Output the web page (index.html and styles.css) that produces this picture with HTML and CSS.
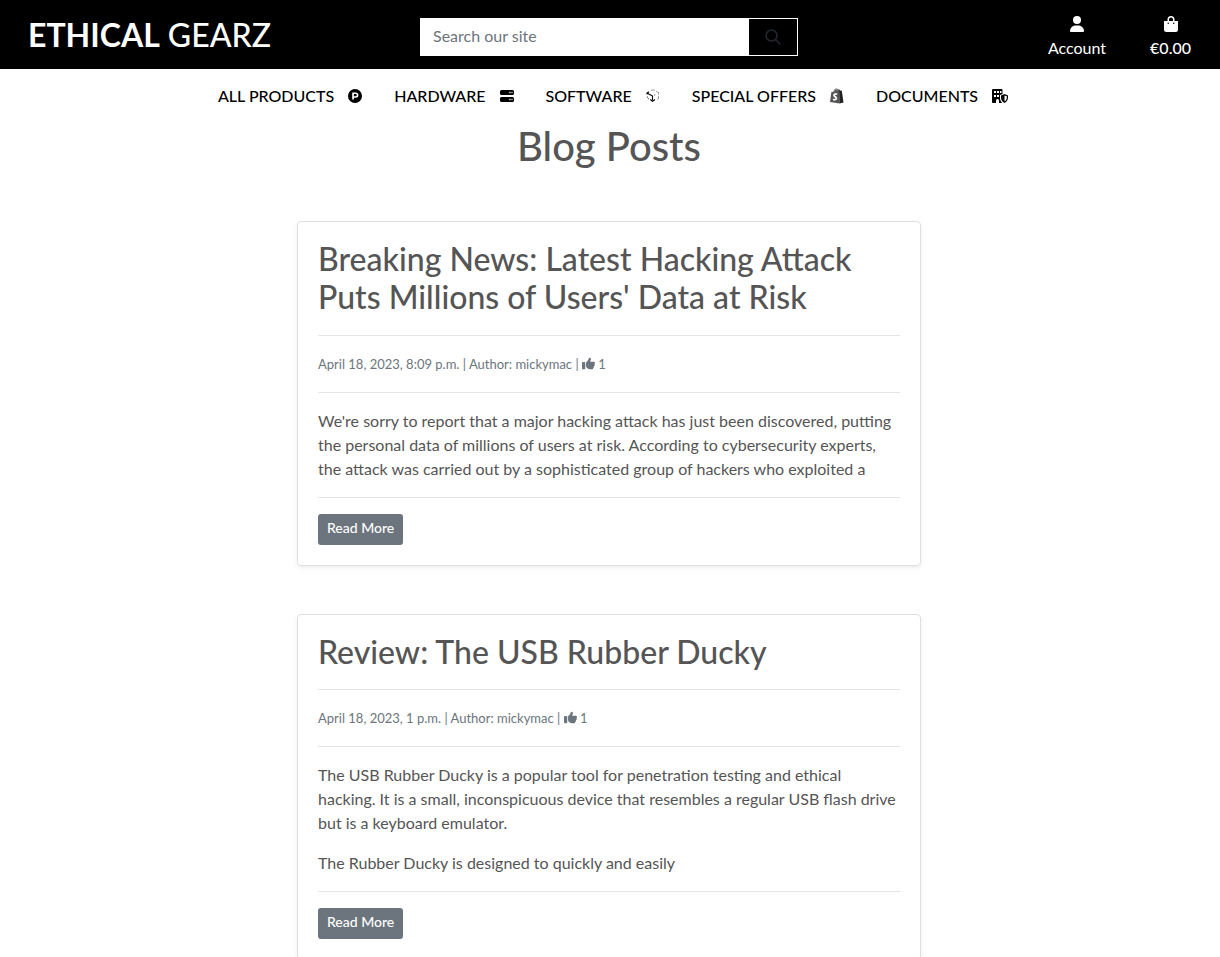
FILE: index.html
```html
<!DOCTYPE html>
<html lang="en">
<head>
<meta charset="utf-8">
<meta name="viewport" content="width=device-width, initial-scale=1">
<title>Ethical Gearz - Blog Posts</title>
<link rel="stylesheet" href="styles.css">
</head>
<body>
<svg class="sprite" aria-hidden="true">
  <symbol id="thumb" viewBox="0 0 512 512"><path d="M313 33c26 5 43 30 38 56l-2 11c-5 30-17 58-33 84h148c26 0 48 22 48 48 0 19-11 35-27 43 11 9 19 22 19 37 0 23-17 43-39 47 4 7 7 16 7 25 0 21-14 39-34 45 1 3 2 7 2 11 0 26-22 40-48 40h-98c-19 0-37-6-53-16l-38-26c-27-18-43-48-43-80V247c0-30 13-57 36-75l8-6c28-23 47-54 54-90l2-11c5-25 30-42 53-32zM32 192h64c18 0 32 14 32 32v224c0 18-14 32-32 32H32c-18 0-32-14-32-32V224c0-18 14-32 32-32z"/></symbol>
</svg>
<header class="site-header">
  <a class="brand" href="#"><strong>ETHICAL</strong> GEARZ</a>
  <form class="search">
    <input class="search-input" type="text" placeholder="Search our site" aria-label="Search our site">
    <button class="search-button" type="button" aria-label="Search">
      <svg viewBox="0 0 16 16" width="16" height="16" fill="none" stroke="currentColor" stroke-width="1.7" stroke-linecap="round"><circle cx="6.5" cy="6.5" r="5.5"/><path d="M10.6 10.6L15 15"/></svg>
    </button>
  </form>
  <div class="account">
    <a class="account-link" href="#">
      <svg viewBox="0 0 14 16" width="14" height="16" fill="currentColor"><circle cx="7" cy="4" r="4"/><path d="M0 15.1C0 12 2.500 9.500 5.600 9.500h2.800C11.500 9.500 14 12 14 15.100c0 .5-.4.9-.9.9H.9c-.5 0-.9-.4-.9-.9z"/></svg>
      <span>Account</span>
    </a>
    <a class="account-link" href="#">
      <svg viewBox="0 0 14 16" width="14" height="16"><path fill="currentColor" fill-rule="evenodd" d="M3.500 5V3.500a3.500 3.500 0 0 1 7 0V5H14v8.500a2.500 2.500 0 0 1-2.500 2.500h-9A2.500 2.500 0 0 1 0 13.500V5zM5 5h4V3.500a2 2 0 0 0-4 0zM4.250 8a.75.75 0 1 0 0-1.500.75.75 0 0 0 0 1.500zm5.500 0a.75.75 0 1 0 0-1.500.75.75 0 0 0 0 1.500z"/></svg>
      <span class="total">€0.00</span>
    </a>
  </div>
</header>
<nav class="main-nav">
  <a href="#">ALL PRODUCTS
    <svg viewBox="0 0 14 14" width="14" height="14"><path fill="currentColor" fill-rule="evenodd" d="M7 0a7 7 0 1 1 0 14A7 7 0 0 1 7 0zM4.200 3.500v7h1.700V8.700h1.900a2.600 2.600 0 0 0 0-5.200zm1.700 1.500h1.800a1.100 1.100 0 0 1 0 2.200H5.900z"/></svg>
  </a>
  <a href="#">HARDWARE
    <svg viewBox="0 0 14 14" width="14" height="14"><path fill="currentColor" fill-rule="evenodd" d="M1.500 1h11A1.500 1.500 0 0 1 14 2.500v2A1.500 1.500 0 0 1 12.500 6h-11A1.500 1.500 0 0 1 0 4.500v-2A1.500 1.500 0 0 1 1.500 1zm0 7h11A1.500 1.500 0 0 1 14 9.500v2a1.500 1.500 0 0 1-1.500 1.500h-11A1.500 1.500 0 0 1 0 11.500v-2A1.500 1.500 0 0 1 1.500 8zM9.300 2.800v1.400h1.200V2.800zm2.200 0v1.400h1V2.800zM9.300 9.800v1.400h1.200V9.800zm2.200 0v1.400h1V9.800z"/></svg>
  </a>
  <a href="#">SOFTWARE
    <svg viewBox="0 0 14 14" width="14" height="14" fill="none" stroke="currentColor"><path d="M1 5.500V4l2-1.200M1.500 4.200L6.500 7v4M4.300 10.500l2.200 1.700 2.500-1.700" stroke-width="1.100"/><path d="M5.500 1.500L7 .8l1.500.7M10.500 2.500l2 1.200v2M12.500 7.500v2l-1.500 1M8.200 6.300l1.500-.8M1.500 7.500v1.500l1.500 1" stroke-width=".7" stroke-dasharray="1.200 .8"/></svg>
  </a>
  <a href="#">SPECIAL OFFERS
    <svg viewBox="0 0 14 16" width="14" height="16"><path fill="#555" d="M1.300 4.300l2-.6C3.800 1.700 5 .4 6.500.4c.7 0 1.200.4 1.600 1l.8-.2.700 14.300L0 13.900z"/><path fill="#222" d="M9 1.300l1.200 1.300 1.600.2L13.500 14.500l-4 1z"/><path fill="none" stroke="#bbb" stroke-width=".7" d="M4.300 3.500C4.700 2 5.500 1.200 6.300 1.200c.7 0 .9.800.9 1.500"/><path fill="none" stroke="#fff" stroke-width="1.700" d="M7.200 6.300C5.600 5.600 4 6.300 4 7.300c0 1.500 2.600 1.500 2.400 3.100-.2 1.500-2 1.700-3.300.8"/></svg>
  </a>
  <a href="#">DOCUMENTS
    <svg viewBox="0 0 16 14" width="16" height="14"><path fill="currentColor" fill-rule="evenodd" d="M1 0h8.500a1 1 0 0 1 1 1v4L8 6v3c0 2 1 3.700 2.200 5H7v-2.500a1.500 1.500 0 0 0-3 0V14H1a1 1 0 0 1-1-1V1a1 1 0 0 1 1-1zm1 2v2h2V2zm3 0v2h2V2zm3 0v2h1.500V2zM2 6v2h2V6zm3 0v2h2V6z"/><path fill="currentColor" fill-rule="evenodd" d="M12.500 5L16 6.400v2.100c0 2.500-1.300 4.500-3.500 5.500C10.300 13 9 11 9 8.500V6.400zm0 1.400v6.200c1.400-.8 2.300-2.200 2.300-4V7.300z"/></svg>
  </a>
</nav>
<main class="content">
  <h1 class="page-title">Blog Posts</h1>
  <article class="card">
    <h2>Breaking News: Latest Hacking Attack Puts Millions of Users' Data at Risk</h2>
    <hr>
    <p class="meta">April 18, 2023, 8:09 p.m. | Author: mickymac | <svg class="like" role="img" aria-label="Likes"><use href="#thumb"/></svg> 1</p>
    <hr>
    <p>We're sorry to report that a major hacking attack has just been discovered, putting the personal data of millions of users at risk. According to cybersecurity experts, the attack was carried out by a sophisticated group of hackers who exploited a</p>
    <hr>
    <a class="read-more" href="#">Read More</a>
  </article>
  <article class="card">
    <h2>Review: The USB Rubber Ducky</h2>
    <hr>
    <p class="meta">April 18, 2023, 1 p.m. | Author: mickymac | <svg class="like" role="img" aria-label="Likes"><use href="#thumb"/></svg> 1</p>
    <hr>
    <p>The USB Rubber Ducky is a popular tool for penetration testing and ethical hacking. It is a small, inconspicuous device that resembles a regular USB flash drive but is a keyboard emulator.</p>
    <p>The Rubber Ducky is designed to quickly and easily</p>
    <hr>
    <a class="read-more" href="#">Read More</a>
  </article>
</main>
</body>
</html>
```

FILE: styles.css
```css
*, *::before, *::after {
  box-sizing: border-box;
}

body {
  margin: 0;
  background: #fff;
  color: #555;
  font-family: Lato, sans-serif;
  font-size: 16px;
  line-height: 24px;
}

a {
  color: inherit;
  text-decoration: none;
}

.sprite {
  display: none;
}

.site-header {
  display: grid;
  grid-template-columns: repeat(3, 1fr);
  align-items: center;
  padding: 9px 2px 9px 0;
  background: #000;
  color: #fff;
}

.brand {
  padding-left: 28px;
  font-size: 32px;
  font-weight: 500;
  line-height: 51px;
}

.search {
  display: flex;
  height: 38px;
  margin: 4px 14px 0;
}

.search-input {
  flex: 1;
  min-width: 0;
  padding: 5px 12px 7px;
  border: 1px solid #fff;
  border-radius: 0;
  background: #fff;
  color: #555;
  font: inherit;
}

.search-input::placeholder {
  color: #6c757d;
  opacity: 1;
}

.search-button {
  display: grid;
  place-items: center;
  width: 49px;
  border: 1px solid #fff;
  border-left: 0;
  background: #000;
  color: #212529;
}

.account {
  display: flex;
  justify-content: flex-end;
  gap: 44px;
  padding-right: 27px;
}

.account-link {
  display: flex;
  flex-direction: column;
  align-items: center;
  gap: 4px;
  padding-top: 7px;
}

.total {
  font-weight: 500;
}

.main-nav {
  display: flex;
  justify-content: center;
  gap: 32px;
  padding: 15px 0 0 6px;
  color: #000;
  font-weight: 500;
}

.main-nav a {
  display: flex;
  align-items: center;
  gap: 14px;
}

.content {
  padding: 0 2px 48px 0;
}

.page-title {
  margin: 14px 0 51px;
  font-size: 40px;
  font-weight: 500;
  line-height: 48px;
  text-align: center;
}

.card {
  max-width: 624px;
  margin: 0 auto 48px;
  padding: 18px 20px 20px;
  border: 1px solid #dfdfdf;
  border-radius: 4px;
  box-shadow: 0 2px 4px rgba(0, 0, 0, 0.075);
}

.card h2 {
  margin: 0 0 18px;
  font-size: 32px;
  font-weight: 500;
  line-height: 1.2;
}

.card p {
  margin: 0 0 16px;
}

.card hr {
  height: 1px;
  margin: 16px 0;
  border: 0;
  background: rgba(0, 0, 0, 0.1);
}

.card .meta {
  color: #6c757d;
  font-size: 13px;
}

.like {
  width: 13px;
  height: 13px;
  fill: currentColor;
  vertical-align: -1px;
}

.read-more {
  display: block;
  width: fit-content;
  padding: 3px 9px 7px;
  border-radius: 3px;
  background: #6c757d;
  color: #fff;
  font-size: 14px;
  font-weight: 500;
  line-height: 21px;
}
```
